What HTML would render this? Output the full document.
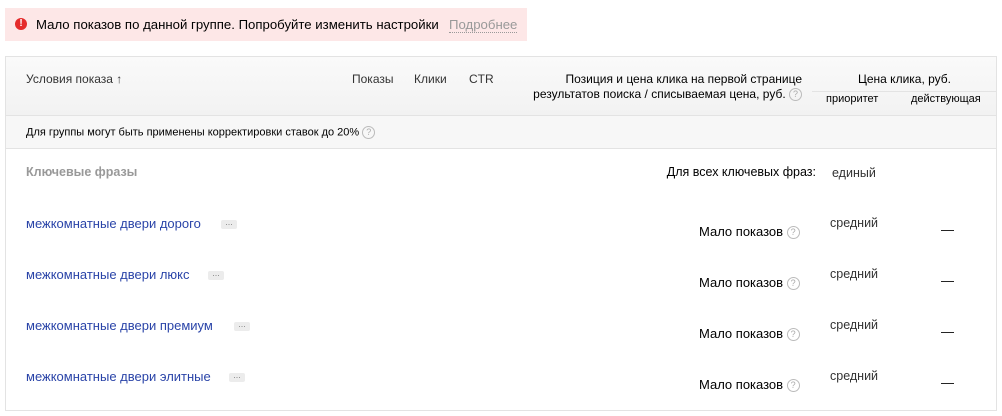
<!DOCTYPE html><html><head><meta charset="utf-8"><style>
body{margin:0;width:1002px;height:416px;background:#fff;font-family:"Liberation Sans",Arial,sans-serif;font-size:13px;color:#000;position:relative;overflow:hidden}
.a{position:absolute;white-space:nowrap}
.q{display:inline-block;width:11px;height:11px;border:1px solid #bbb;border-radius:50%;color:#aaa;font-size:9px;line-height:11px;text-align:center;vertical-align:middle}
.lnk{color:#2a44a8}
.dots{position:absolute;width:16px;height:9px;background:#ececec;border-radius:2px;color:#888;font-size:9px;line-height:5px;text-align:center}
.gr{color:#333}
</style></head><body>
<div class="a" style="left:5px;top:8px;width:522px;height:33px;background:#fde7e7"></div>
<div class="a" style="left:15px;top:18px;width:12px;height:12px;border-radius:50%;background:#e52b2b;color:#fff;font-size:10px;font-weight:bold;line-height:12px;text-align:center">!</div>
<div class="a" style="left:36px;top:17px;font-size:13.2px">Мало показов по данной группе. Попробуйте изменить настройки</div>
<div class="a" style="left:449px;top:17px;font-size:13.2px;color:#999;border-bottom:1px dotted #999;line-height:15px">Подробнее</div>

<div class="a" style="left:5px;top:56px;width:990px;height:353px;border:1px solid #e3e3e3"></div>
<div class="a" style="left:6px;top:57px;width:990px;height:58px;background:linear-gradient(#fafafa,#f2f2f2);border-bottom:1px solid #e3e3e3"></div>
<div class="a" style="left:6px;top:116px;width:990px;height:32px;background:#f7f7f7;border-bottom:1px solid #e3e3e3"></div>
<div class="a" style="left:812px;top:91px;width:184px;border-top:1px solid #e3e3e3"></div>

<div class="a gr" style="left:26px;top:72px;font-size:12px">Условия показа ↑</div>
<div class="a gr" style="left:352px;top:72px;font-size:12px">Показы</div>
<div class="a gr" style="left:414px;top:72px;font-size:12px">Клики</div>
<div class="a gr" style="left:469px;top:72px;font-size:12px">CTR</div>
<div class="a" style="left:500px;top:72px;width:302px;text-align:right;line-height:15px;font-size:12px">Позиция и цена клика на первой странице<br>результатов поиска / списываемая цена, руб. <span class="q">?</span></div>
<div class="a" style="left:858px;top:72px;font-size:12px">Цена клика, руб.</div>
<div class="a" style="left:826px;top:93px;font-size:11px">приоритет</div>
<div class="a" style="left:911px;top:93px;font-size:11px">действующая</div>

<div class="a" style="left:26px;top:126px;font-size:11px">Для группы могут быть применены корректировки ставок до 20% <span class="q">?</span></div>

<div class="a" style="left:26px;top:165px;color:#999;font-weight:bold;font-size:12.5px">Ключевые фразы</div>
<div class="a" style="left:616px;top:165px;width:200px;text-align:right;font-size:12.5px">Для всех ключевых фраз:</div>
<div class="a gr" style="left:832px;top:166px;font-size:12.5px">единый</div>

<div class="a lnk" style="left:26px;top:216px">межкомнатные двери дорого</div><div class="dots" style="left:221px;top:220px">...</div>
<div class="a lnk" style="left:26px;top:267px">межкомнатные двери люкс</div><div class="dots" style="left:208px;top:271px">...</div>
<div class="a lnk" style="left:26px;top:318px">межкомнатные двери премиум</div><div class="dots" style="left:234px;top:322px">...</div>
<div class="a lnk" style="left:26px;top:369px">межкомнатные двери элитные</div><div class="dots" style="left:229px;top:373px">...</div>

<div class="a" style="left:699px;top:224px">Мало показов <span class="q">?</span></div>
<div class="a" style="left:699px;top:275px">Мало показов <span class="q">?</span></div>
<div class="a" style="left:699px;top:326px">Мало показов <span class="q">?</span></div>
<div class="a" style="left:699px;top:377px">Мало показов <span class="q">?</span></div>
<div class="a gr" style="left:830px;top:216px;font-size:12.5px">средний</div>
<div class="a gr" style="left:830px;top:267px;font-size:12.5px">средний</div>
<div class="a gr" style="left:830px;top:318px;font-size:12.5px">средний</div>
<div class="a gr" style="left:830px;top:369px;font-size:12.5px">средний</div>
<div class="a" style="left:941px;top:222px">—</div>
<div class="a" style="left:941px;top:273px">—</div>
<div class="a" style="left:941px;top:324px">—</div>
<div class="a" style="left:941px;top:375px">—</div>
</body></html>
